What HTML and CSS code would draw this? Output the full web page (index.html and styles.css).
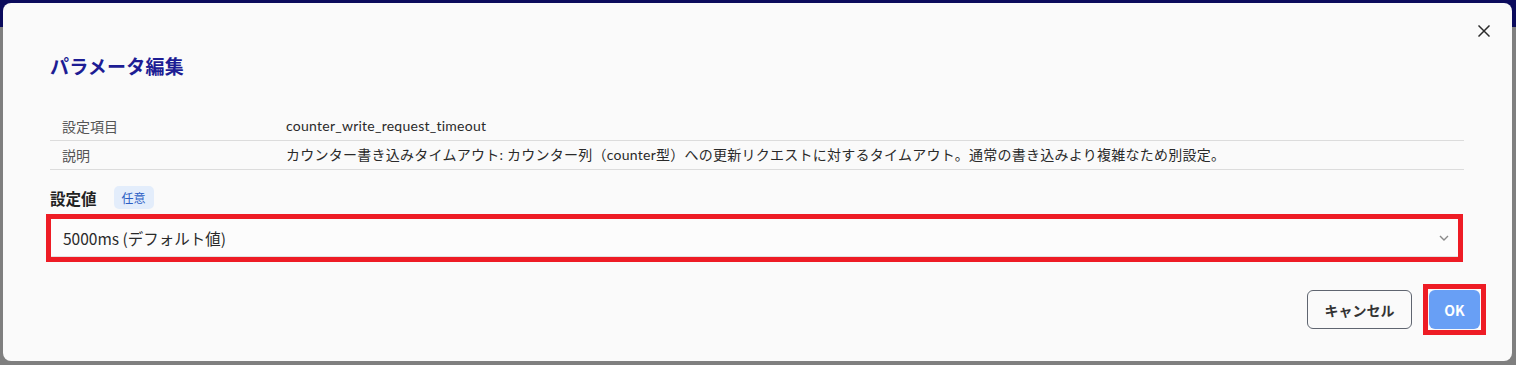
FILE: index.html
```html
<!DOCTYPE html>
<html lang="ja">
<head>
<meta charset="utf-8">
<title>パラメータ編集</title>
<link rel="stylesheet" href="styles.css">
</head>
<body>
<div class="dialog">
  <button class="close" aria-label="閉じる">
    <svg width="12" height="12" viewBox="0 0 12 12"><path d="M1 1L11 11M11 1L1 11" stroke="#2b2b2b" stroke-width="1.5" fill="none" stroke-linecap="square"/></svg>
  </button>
  <div class="content">
    <h2 class="title">パラメータ編集</h2>
    <div class="info">
      <div class="row">
        <div class="label">設定項目</div>
        <div class="value">counter_write_request_timeout</div>
      </div>
      <div class="row">
        <div class="label">説明</div>
        <div class="value">カウンター書き込みタイムアウト: カウンター列（counter型）への更新リクエストに対するタイムアウト。通常の書き込みより複雑なため別設定。</div>
      </div>
    </div>
    <div class="field-head">
      <span class="field-label">設定値</span>
      <span class="chip">任意</span>
    </div>
    <div class="mark select-mark">
      <div class="select">
        <span class="select-text">5000ms (デフォルト値)</span>
        <svg class="chev" width="10" height="6" viewBox="0 0 10 6"><path d="M1 1L5 5L9 1" stroke="#8a8a8a" stroke-width="1.4" fill="none"/></svg>
      </div>
    </div>
  </div>
  <div class="actions">
    <button class="btn cancel">キャンセル</button>
    <div class="mark ok-mark">
      <button class="btn ok">OK</button>
    </div>
  </div>
</div>
</body>
</html>
```
FILE: styles.css
```css
* { box-sizing: border-box; }
html, body { margin: 0; padding: 0; }
body {
  width: 1516px;
  height: 365px;
  overflow: hidden;
  background: linear-gradient(#0b0b5c 0 27px, #7f7f7f 27px);
  font-family: "Noto Sans CJK JP", "Noto Sans", sans-serif;
  color: #222;
}
.dialog {
  position: relative;
  margin: 3px 0 0 3px;
  width: 1509px;
  height: 358px;
  background: #fafafa;
  border-radius: 8px;
  display: flex;
  flex-direction: column;
}
.close {
  position: absolute;
  top: 22px;
  right: 22px;
  width: 12px;
  height: 12px;
  padding: 0;
  border: 0;
  background: none;
  display: flex;
}
.content {
  padding: 49px 48px 0 47px;
}
.title {
  margin: 0 0 32px;
  font-size: 19px;
  line-height: 28px;
  font-weight: 700;
  letter-spacing: 0.2px;
  color: #1d1d94;
}
.info { display: flex; flex-direction: column; }
.row {
  display: grid;
  grid-template-columns: 236px 1fr;
  height: 29px;
  border-bottom: 1px solid #dcdcdc;
  font-size: 14px;
  line-height: 28px;
}
.label { padding-left: 12px; color: #555; }
.value {
  color: #2a2a2a;
  white-space: nowrap;
  font-family: Lato, "Noto Sans CJK JP", sans-serif;
  letter-spacing: 0.25px;
}
.field-head {
  margin-top: 16px;
  display: flex;
  align-items: center;
  gap: 17px;
  height: 23px;
}
.field-label {
  font-size: 15.5px;
  font-weight: 700;
  color: #222;
}
.chip {
  height: 23px;
  padding: 0 8px;
  border-radius: 5px;
  background: #e3edfb;
  color: #2c5ec4;
  font-size: 12px;
  line-height: 23px;
}
.mark {
  border: 5px solid #ee1c25;
}
.select-mark {
  margin: 5px 0 0 -4px;
  width: 1417px;
  height: 48px;
}
.select {
  height: 38px;
  background: #fcfcfc;
  border-bottom: 1px solid #e2e2e2;
  display: flex;
  align-items: center;
  justify-content: space-between;
  padding: 0 9px 0 12px;
}
.select-text {
  font-size: 15.5px;
  color: #2a2a2a;
}
.actions {
  margin-top: 22px;
  padding-right: 26px;
  display: flex;
  justify-content: flex-end;
  align-items: center;
  gap: 11px;
}
.btn {
  font-family: "Noto Sans CJK JP", "Noto Sans", sans-serif;
  font-weight: 700;
  font-size: 14px;
  height: 39px;
  border-radius: 6px;
  cursor: pointer;
}
.cancel {
  width: 105px;
  border: 1px solid #5f6570;
  background: #fafafa;
  color: #333;
  padding: 0;
}
.ok-mark {
  padding: 1px;
  width: 63px;
  height: 51px;
}
.ok {
  width: 51px;
  border: 0;
  background: #689ff5;
  color: #fff;
  padding: 0;
}
```
